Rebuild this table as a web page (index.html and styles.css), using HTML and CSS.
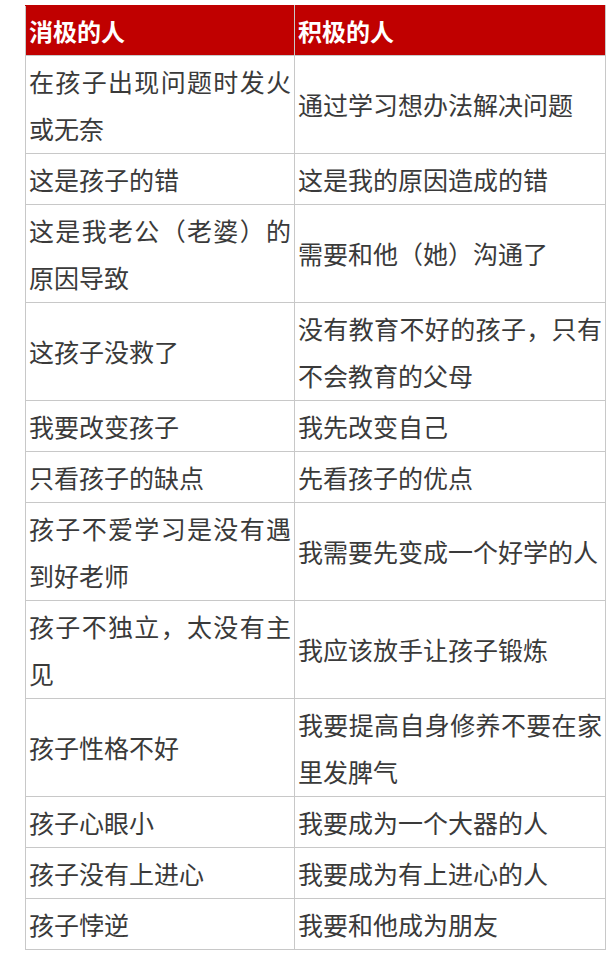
FILE: index.html
```html
<!DOCTYPE html>
<html lang="zh-CN">
<head>
<meta charset="utf-8">
<title>消极的人 与 积极的人</title>
<link rel="stylesheet" href="styles.css">
</head>
<body>
<div class="page">
  <table class="compare">
    <colgroup>
      <col class="col-left">
      <col class="col-right">
    </colgroup>
    <thead>
      <tr>
        <th>消极的人</th>
        <th>积极的人</th>
      </tr>
    </thead>
    <tbody>
      <tr><td>在孩子出现问题时发火或无奈</td><td>通过学习想办法解决问题</td></tr>
      <tr><td>这是孩子的错</td><td>这是我的原因造成的错</td></tr>
      <tr><td>这是我老公（老婆）的原因导致</td><td>需要和他（她）沟通了</td></tr>
      <tr><td>这孩子没救了</td><td>没有教育不好的孩子，只有不会教育的父母</td></tr>
      <tr><td>我要改变孩子</td><td>我先改变自己</td></tr>
      <tr><td>只看孩子的缺点</td><td>先看孩子的优点</td></tr>
      <tr><td>孩子不爱学习是没有遇到好老师</td><td>我需要先变成一个好学的人</td></tr>
      <tr><td>孩子不独立，太没有主见</td><td>我应该放手让孩子锻炼</td></tr>
      <tr><td>孩子性格不好</td><td>我要提高自身修养不要在家里发脾气</td></tr>
      <tr><td>孩子心眼小</td><td>我要成为一个大器的人</td></tr>
      <tr><td>孩子没有上进心</td><td>我要成为有上进心的人</td></tr>
      <tr><td>孩子悖逆</td><td>我要和他成为朋友</td></tr>
    </tbody>
  </table>
</div>
</body>
</html>
```

FILE: styles.css
```css
html, body {
  margin: 0;
  padding: 0;
  background: #ffffff;
}

.page {
  padding: 5px 0 0 25px;
  font-family: "Noto Sans CJK SC", "Noto Sans", sans-serif;
}

.compare {
  border-collapse: collapse;
  table-layout: fixed;
  width: 580px;
}

.col-left {
  width: 269px;
}

.col-right {
  width: 311px;
}

.compare th,
.compare td {
  border: 1px solid #c8c8c8;
  padding: 1.5px 3px;
  text-align: justify;
  vertical-align: middle;
}

.compare th {
  background: #c00000;
  border-color: #c00000 #c8c8c8 #c8c8c8 #c8c8c8;
  color: #ffffff;
  font-size: 24px;
  font-weight: 700;
  line-height: 46px;
  text-align: left;
}

.compare td {
  color: #3a3a3a;
  font-size: 25px;
  font-weight: 400;
  line-height: 47px;
}
```
